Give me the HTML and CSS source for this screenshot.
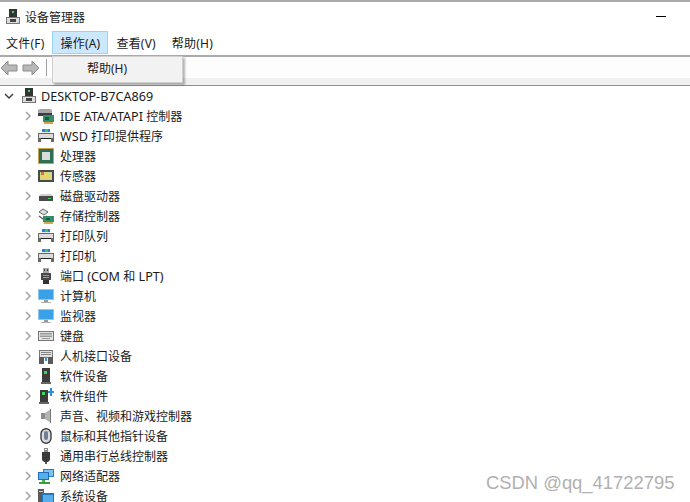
FILE: index.html
```html
<!DOCTYPE html>
<html lang="zh-CN">
<head>
  <meta charset="UTF-8">
  <title>设备管理器</title>
  <link rel="stylesheet" href="styles.css">
</head>
<body>
  <svg class="defs" width="0" height="0">
    <symbol id="chev" viewBox="0 0 8 10"><path d="M2 1l4 4-4 4" fill="none" stroke="#a6a6a6" stroke-width="1.6"/></symbol>
    <symbol id="chev-down" viewBox="0 0 10 8"><path d="M1 2l4 4 4-4" fill="none" stroke="#404040" stroke-width="1.5"/></symbol>
    <symbol id="host" viewBox="0 0 16 16"><path d="M4 0h8v9H4z" fill="#333"/><path d="M7 2h2v2H7z" fill="#3fd45a"/><path d="M1 8h14v7H1z" fill="#777"/><path d="M2 9h12v5H2z" fill="#dcdcdc"/><path d="M5 10h6v3H5z" fill="#444"/></symbol>
    <symbol id="ide" viewBox="0 0 16 16"><path d="M0 3q0-2 2-2h10q2 0 2 2v3H0z" fill="#a8a8a8"/><path d="M0 5h14v3H0z" fill="#3c3c3c"/><path d="M5 7h11v7H5z" fill="#2f8f6a"/><path d="M7 9h4v3H7z" fill="#1d5a42"/><path d="M6 14h9v2H6z" fill="#e0a040"/></symbol>
    <symbol id="printer" viewBox="0 0 16 16"><path d="M4 1h8v5H4z" fill="#e8e8e8"/><path d="M4 1h3v3H4z" fill="#2a7fd8"/><path d="M7 1h3v3H7z" fill="#3fc46a"/><path d="M10 1h2v3h-2z" fill="#2a7fd8"/><path d="M0 5h16v9H0z" fill="#686868"/><path d="M1 6h14v4H1z" fill="#dcdcdc"/><path d="M3 10h10v5H3z" fill="#fff"/><path d="M3 10h10v1H3z" fill="#222"/></symbol>
    <symbol id="cpu" viewBox="0 0 16 16"><path d="M0 0h16v16H0z" fill="#c9a050"/><path d="M1 1h14v14H1z" fill="#2e6e55"/><path d="M4 4h8v8H4z" fill="#d8dcd8"/></symbol>
    <symbol id="sensor" viewBox="0 0 16 16"><path d="M0 2h16v12H0z" fill="#4a4a4a"/><path d="M2 4h12v8H2z" fill="#c8dc8c"/><path d="M7 4h2v8H7zM2 7h12v2H2z" fill="#f0d060"/><path d="M3 4h3v3H3z" fill="#d87040"/></symbol>
    <symbol id="disk" viewBox="0 0 16 16"><path d="M1 8l2-2h10l2 2z" fill="#d0d0d0"/><path d="M1 8h14v5H1z" fill="#4a4a4a"/><path d="M10 10h3v1h-3z" fill="#3fd45a"/></symbol>
    <symbol id="storage" viewBox="0 0 16 16"><path d="M1 4l4-3 5 3-4 3z" fill="#e0e0e0" stroke="#444" stroke-width=".8"/><path d="M1 8l4 3 4-3" fill="none" stroke="#555" stroke-width="1.2"/><path d="M5 8h11v6H5z" fill="#2f8f6a"/><path d="M8 10h4v2H8z" fill="#1d5a42"/><path d="M6 14h9v2H6z" fill="#d8a850"/></symbol>
    <symbol id="port" viewBox="0 0 16 16"><path d="M5 0h6v5H5z" fill="#a8a8a8"/><path d="M6 1h1v2H6zM9 1h1v2H9z" fill="#444"/><path d="M3 5h10v7H3z" fill="#4a4a4a"/><path d="M5 7h6v1H5zM5 9h6v1H5z" fill="#999"/><path d="M5 12h6v4H5z" fill="#333"/></symbol>
    <symbol id="monitor" viewBox="0 0 16 16"><path d="M0 1h16v11H0z" fill="#8ec8ee"/><path d="M1 2h14v9H1z" fill="#3aa0e8"/><path d="M6 12h4v2H6z" fill="#999"/><path d="M3 14h10v1H3z" fill="#b0b0b0"/></symbol>
    <symbol id="keyboard" viewBox="0 0 16 16"><path d="M0 3h16v10H0z" fill="#777"/><path d="M1 4h14v8H1z" fill="#e4e4e4"/><path d="M2 5h12v1.500H2zM2 7.500h12v1.500H2zM4 10h8v1H4z" fill="#999"/></symbol>
    <symbol id="hid" viewBox="0 0 16 16"><path d="M1 2h14v8H1z" fill="#777"/><path d="M2 3h12v6H2z" fill="#e0e0e0"/><path d="M3 4h10v1H3zM3 6h10v1H3z" fill="#888"/><path d="M1 9h5v7H1zM10 9h5v7h-5z" fill="#5a5a5a"/><path d="M7 10h2v3H7z" fill="#3a8fd8"/></symbol>
    <symbol id="device" viewBox="0 0 16 16"><path d="M4 0h8v14H4z" fill="#3c3c3c"/><path d="M6 3h3v3H6z" fill="#3fd45a"/><path d="M3 14h10v2H3z" fill="#666"/></symbol>
    <symbol id="component" viewBox="0 0 16 16"><path d="M2 2h8v12H2z" fill="#3c3c3c"/><path d="M4 4h3v3H4z" fill="#3fd45a"/><path d="M1 14h10v2H1z" fill="#666"/><path d="M12 0h2v3h2v2h-2v3h-2V5h-2V3h2z" fill="#2a8fe0"/></symbol>
    <symbol id="sound" viewBox="0 0 16 16"><path d="M3 5h4v6H3z" fill="#8c8c8c"/><path d="M7 5l6-4v14l-6-4z" fill="#b4b4b4"/><path d="M12 1h1v14h-1z" fill="#777"/></symbol>
    <symbol id="mouse" viewBox="0 0 16 16"><rect x="3" y=".7" width="10" height="14.6" rx="5" fill="#d8dde4" stroke="#3c3c3c" stroke-width="1.4"/><rect x="6" y="3" width="4" height="9" rx="2" fill="#6f7f90"/></symbol>
    <symbol id="usb" viewBox="0 0 16 16"><path d="M6 0h4v4H6z" fill="#8a8a8a"/><path d="M7 1h2v1H7z" fill="#eee"/><path d="M4 4h8v8l-2 2H6l-2-2z" fill="#3a3a3a"/><path d="M7 14h2v2H7z" fill="#555"/></symbol>
    <symbol id="network" viewBox="0 0 16 16"><path d="M5 1h11v8H5z" fill="#2a7fc8"/><path d="M6 2h9v6H6z" fill="#7cc4f0"/><path d="M0 4h11v8H0z" fill="#1f6fb8"/><path d="M1 5h9v6H1z" fill="#58aeea"/><path d="M4 12h3v2H4z" fill="#4caf50"/><path d="M1 14h11v2H1z" fill="#3c9a44"/></symbol>
    <symbol id="system" viewBox="0 0 16 16"><path d="M0 1h6v15H0z" fill="#5a5a5a"/><path d="M1 3h4v1H1z" fill="#ccc"/><path d="M4 5h12v10H4z" fill="#1f78c0"/><path d="M5 7h10v7H5z" fill="#56aeea"/></symbol>
  </svg>

  <div class="window">
    <header class="titlebar">
      <svg class="icon"><use href="#host"/></svg>
      <span class="title">设备管理器</span>
      <span class="minimize"></span>
    </header>

    <nav class="menubar">
      <span class="menu-item">文件(F)</span>
      <span class="menu-item active">操作(A)</span>
      <span class="menu-item">查看(V)</span>
      <span class="menu-item">帮助(H)</span>
    </nav>

    <div class="toolbar">
      <svg class="arrow" viewBox="0 0 18 16"><path d="M1 8l7-7v4h9v6H8v4z" fill="#b8b8b8" stroke="#8c8c8c"/></svg>
      <svg class="arrow" viewBox="0 0 18 16"><path d="M17 8l-7-7v4H1v6h9v4z" fill="#b8b8b8" stroke="#8c8c8c"/></svg>
      <span class="tool-sep"></span>
    </div>
    <div class="toolbar-band"></div>

    <div class="dropdown">帮助(H)</div>

    <main class="tree">
      <div class="row root">
        <svg class="chev-down"><use href="#chev-down"/></svg>
        <svg class="icon"><use href="#host"/></svg>
        <span class="latin">DESKTOP-B7CA869</span>
      </div>
      <div class="row"><svg class="chev"><use href="#chev"/></svg><svg class="icon"><use href="#ide"/></svg><span><span class="latin">IDE ATA/ATAPI </span>控制器</span></div>
      <div class="row"><svg class="chev"><use href="#chev"/></svg><svg class="icon"><use href="#printer"/></svg><span><span class="latin">WSD </span>打印提供程序</span></div>
      <div class="row"><svg class="chev"><use href="#chev"/></svg><svg class="icon"><use href="#cpu"/></svg><span>处理器</span></div>
      <div class="row"><svg class="chev"><use href="#chev"/></svg><svg class="icon"><use href="#sensor"/></svg><span>传感器</span></div>
      <div class="row"><svg class="chev"><use href="#chev"/></svg><svg class="icon"><use href="#disk"/></svg><span>磁盘驱动器</span></div>
      <div class="row"><svg class="chev"><use href="#chev"/></svg><svg class="icon"><use href="#storage"/></svg><span>存储控制器</span></div>
      <div class="row"><svg class="chev"><use href="#chev"/></svg><svg class="icon"><use href="#printer"/></svg><span>打印队列</span></div>
      <div class="row"><svg class="chev"><use href="#chev"/></svg><svg class="icon"><use href="#printer"/></svg><span>打印机</span></div>
      <div class="row"><svg class="chev"><use href="#chev"/></svg><svg class="icon"><use href="#port"/></svg><span>端口<span class="latin"> (COM </span>和<span class="latin"> LPT)</span></span></div>
      <div class="row"><svg class="chev"><use href="#chev"/></svg><svg class="icon"><use href="#monitor"/></svg><span>计算机</span></div>
      <div class="row"><svg class="chev"><use href="#chev"/></svg><svg class="icon"><use href="#monitor"/></svg><span>监视器</span></div>
      <div class="row"><svg class="chev"><use href="#chev"/></svg><svg class="icon"><use href="#keyboard"/></svg><span>键盘</span></div>
      <div class="row"><svg class="chev"><use href="#chev"/></svg><svg class="icon"><use href="#hid"/></svg><span>人机接口设备</span></div>
      <div class="row"><svg class="chev"><use href="#chev"/></svg><svg class="icon"><use href="#device"/></svg><span>软件设备</span></div>
      <div class="row"><svg class="chev"><use href="#chev"/></svg><svg class="icon"><use href="#component"/></svg><span>软件组件</span></div>
      <div class="row"><svg class="chev"><use href="#chev"/></svg><svg class="icon"><use href="#sound"/></svg><span>声音、视频和游戏控制器</span></div>
      <div class="row"><svg class="chev"><use href="#chev"/></svg><svg class="icon"><use href="#mouse"/></svg><span>鼠标和其他指针设备</span></div>
      <div class="row"><svg class="chev"><use href="#chev"/></svg><svg class="icon"><use href="#usb"/></svg><span>通用串行总线控制器</span></div>
      <div class="row"><svg class="chev"><use href="#chev"/></svg><svg class="icon"><use href="#network"/></svg><span>网络适配器</span></div>
      <div class="row"><svg class="chev"><use href="#chev"/></svg><svg class="icon"><use href="#system"/></svg><span>系统设备</span></div>
    </main>

    <div class="watermark">CSDN @qq_41722795</div>
  </div>
</body>
</html>
```

FILE: styles.css
```css
html, body {
  margin: 0;
  height: 100%;
  background: #fff;
  overflow: hidden;
}
.defs {
  position: absolute;
}
.window {
  position: relative;
  height: 502px;
  overflow: hidden;
  box-sizing: border-box;
  border-top: 2px solid #a9a9a9;
  font: 12px "Noto Sans", "Noto Sans CJK SC", sans-serif;
  color: #1a1a1a;
}
.icon {
  width: 16px;
  height: 16px;
  flex: none;
}
.latin {
  font-size: 12.6px;
  white-space: pre;
}

.titlebar {
  height: 29px;
  display: flex;
  align-items: center;
  padding-left: 5px;
  gap: 4px;
}
.title {
  flex: 1;
}
.minimize {
  width: 10px;
  height: 1px;
  background: #000;
  margin-right: 24px;
}

.menubar {
  height: 24px;
  display: flex;
  border-bottom: 2px solid #a9a9a9;
}
.menu-item {
  box-sizing: border-box;
  height: 23px;
  line-height: 26px;
  padding: 0 6px;
  margin-right: 4px;
  letter-spacing: 0.2px;
}
.menu-item:first-child {
  margin-right: 2px;
}
.menu-item.active {
  width: 56px;
  padding: 0;
  line-height: 24px;
  text-align: center;
  background: #cce8ff;
  border: 1px solid #99d1ff;
  margin-right: 2px;
}

.toolbar {
  height: 21px;
  background: #fdfdfe;
  display: flex;
  align-items: center;
  gap: 4px;
}
.arrow {
  width: 18px;
  height: 16px;
}
.tool-sep {
  width: 1px;
  height: 17px;
  background: #a0a0a0;
  margin-left: 2px;
}
.toolbar-band {
  height: 7px;
  background: #f0f0f0;
  border-bottom: 1px solid #8f8f8f;
}

.dropdown {
  position: absolute;
  z-index: 2;
  left: 52px;
  top: 54px;
  width: 131px;
  height: 27px;
  line-height: 24px;
  box-sizing: border-box;
  padding-left: 34px;
  background: #f2f2f2;
  border: 1px solid #d0d0d0;
  box-shadow: 2px 2px 2px rgba(0, 0, 0, 0.3);
}

.row {
  height: 20px;
  display: flex;
  align-items: center;
  padding-left: 24px;
}
.chev {
  width: 8px;
  height: 10px;
  margin-right: 6px;
  flex: none;
}
.row .icon {
  margin-right: 6px;
}
.root {
  padding-left: 4px;
}
.chev-down {
  width: 10px;
  height: 8px;
  margin-right: 7px;
  flex: none;
}
.root .icon {
  margin-right: 4px;
}

.watermark {
  position: absolute;
  left: 486px;
  top: 470px;
  font: 18.4px "Liberation Sans", sans-serif;
  color: #b0b0b0;
  white-space: nowrap;
}
```
